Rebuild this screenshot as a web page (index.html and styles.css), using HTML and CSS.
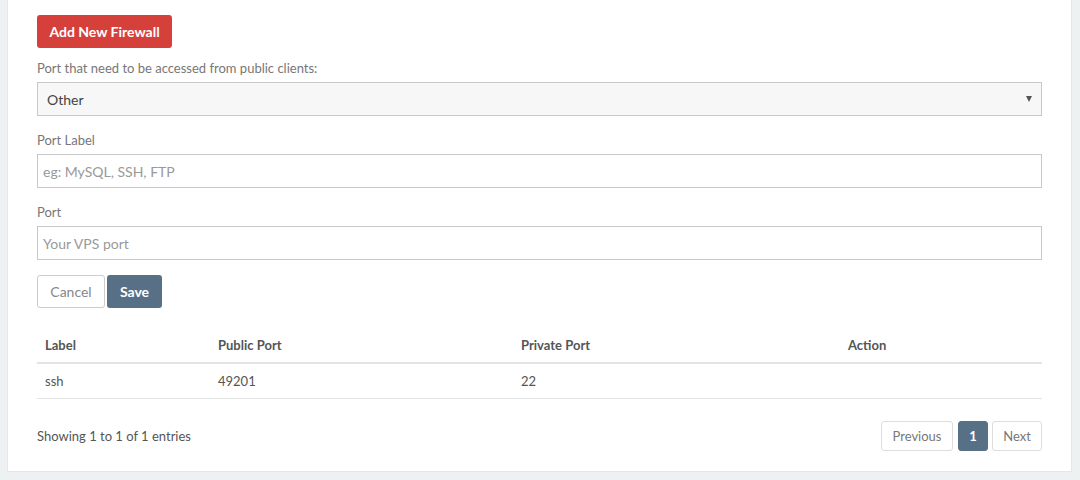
FILE: index.html
```html
<!DOCTYPE html>
<html>
<head>
<meta charset="utf-8">
<link rel="stylesheet" href="styles.css">
</head>
<body>
<div class="card">
  <button class="btn btn-red">Add New Firewall</button>
  <div class="field">
    <label class="lbl">Port that need to be accessed from public clients:</label>
    <div class="select">
      <span>Other</span>
      <span class="caret"></span>
    </div>
  </div>
  <div class="field">
    <label class="lbl">Port Label</label>
    <div class="input"><span class="ph">eg: MySQL, SSH, FTP</span></div>
  </div>
  <div class="field">
    <label class="lbl">Port</label>
    <div class="input"><span class="ph">Your VPS port</span></div>
  </div>
  <div class="actions">
    <button class="btn btn-default">Cancel</button>
    <button class="btn btn-save">Save</button>
  </div>
  <table class="tbl">
    <colgroup>
      <col class="c1"><col class="c2"><col class="c3"><col class="c4">
    </colgroup>
    <thead>
      <tr><th>Label</th><th>Public Port</th><th>Private Port</th><th>Action</th></tr>
    </thead>
    <tbody>
      <tr><td>ssh</td><td>49201</td><td>22</td><td></td></tr>
    </tbody>
  </table>
  <div class="footer">
    <div class="info">Showing 1 to 1 of 1 entries</div>
    <div class="pager">
      <span class="pg pg-prev">Previous</span>
      <span class="pg active">1</span>
      <span class="pg pg-next">Next</span>
    </div>
  </div>
</div>
</body>
</html>
```
FILE: styles.css
```css
* { box-sizing: border-box; }
html, body { margin: 0; padding: 0; }
body {
  background: #eef1f2;
  font-family: Lato, "Open Sans", sans-serif;
  color: #555;
  width: 1080px;
  height: 480px;
  overflow: hidden;
}
.card {
  margin-left: 7px;
  width: 1065px;
  height: 472px;
  background: #fff;
  border: 1px solid #e4e7e9;
  border-top: none;
  padding: 15px 29px 0 29px;
}
.btn {
  font-family: Lato, sans-serif;
  font-size: 14px;
  border-radius: 3px;
  border: 1px solid transparent;
  cursor: pointer;
  padding: 0 12px;
  height: 33px;
}
.btn-red {
  background: #d6403b;
  color: #fff;
  font-weight: bold;
  width: 135px;
  padding: 0;
}
.field { margin-top: 12px; }
.field + .field { margin-top: 16px; }
.lbl {
  display: block;
  font-size: 13px;
  color: #777;
  line-height: 16px;
  margin-bottom: 6px;
}
.select {
  height: 34px;
  background: #f7f7f7;
  border: 1px solid #c8c8c8;
  display: flex;
  align-items: center;
  justify-content: space-between;
  padding: 0 8px 0 9px;
  font-size: 14px;
  color: #444;
}
.caret {
  width: 0; height: 0;
  border-left: 3.5px solid transparent;
  border-right: 3.5px solid transparent;
  border-top: 6px solid #555;
  margin-right: 1px;
}
.input {
  height: 34px;
  border: 1px solid #c8c8c8;
  display: flex;
  align-items: center;
  padding: 0 5px;
  font-size: 14px;
}
.ph { color: #999; }
.actions {
  margin-top: 15px;
  display: flex;
  gap: 2px;
}
.btn-default {
  background: #fff;
  border-color: #ccc;
  color: #888;
  width: 68px;
  padding: 0;
}
.btn-save {
  background: #587086;
  color: #fff;
  font-weight: bold;
  width: 55px;
  padding: 0;
}
.tbl {
  margin-top: 20px;
  width: 1005px;
  border-collapse: collapse;
  table-layout: fixed;
  font-size: 13px;
}
.c1 { width: 173px; }
.c2 { width: 303px; }
.c3 { width: 327px; }
.c4 { width: 202px; }
.tbl th {
  text-align: left;
  font-weight: bold;
  color: #555;
  padding: 0 8px;
  height: 35px;
  vertical-align: middle;
  border-bottom: 2px solid #e3e3e3;
}
.tbl td {
  padding: 0 8px;
  height: 35px;
  color: #555;
  border-bottom: 1px solid #e3e3e3;
  vertical-align: middle;
}
.footer {
  margin-top: 22px;
  display: flex;
  justify-content: space-between;
  align-items: center;
}
.info { font-size: 13px; color: #555; }
.pager { display: flex; margin-right: 0; }
.pg {
  display: flex;
  align-items: center;
  justify-content: center;
  height: 30px;
  border: 1px solid #ddd;
  border-radius: 3px;
  font-size: 13px;
  color: #777;
}
.pg-prev { width: 72px; }
.pg.active {
  background: #587086;
  border-color: #587086;
  color: #fff;
  font-weight: bold;
  width: 30px;
  margin-left: 5px;
  margin-right: 4px;
}
.pg-next { width: 50px; }
```
